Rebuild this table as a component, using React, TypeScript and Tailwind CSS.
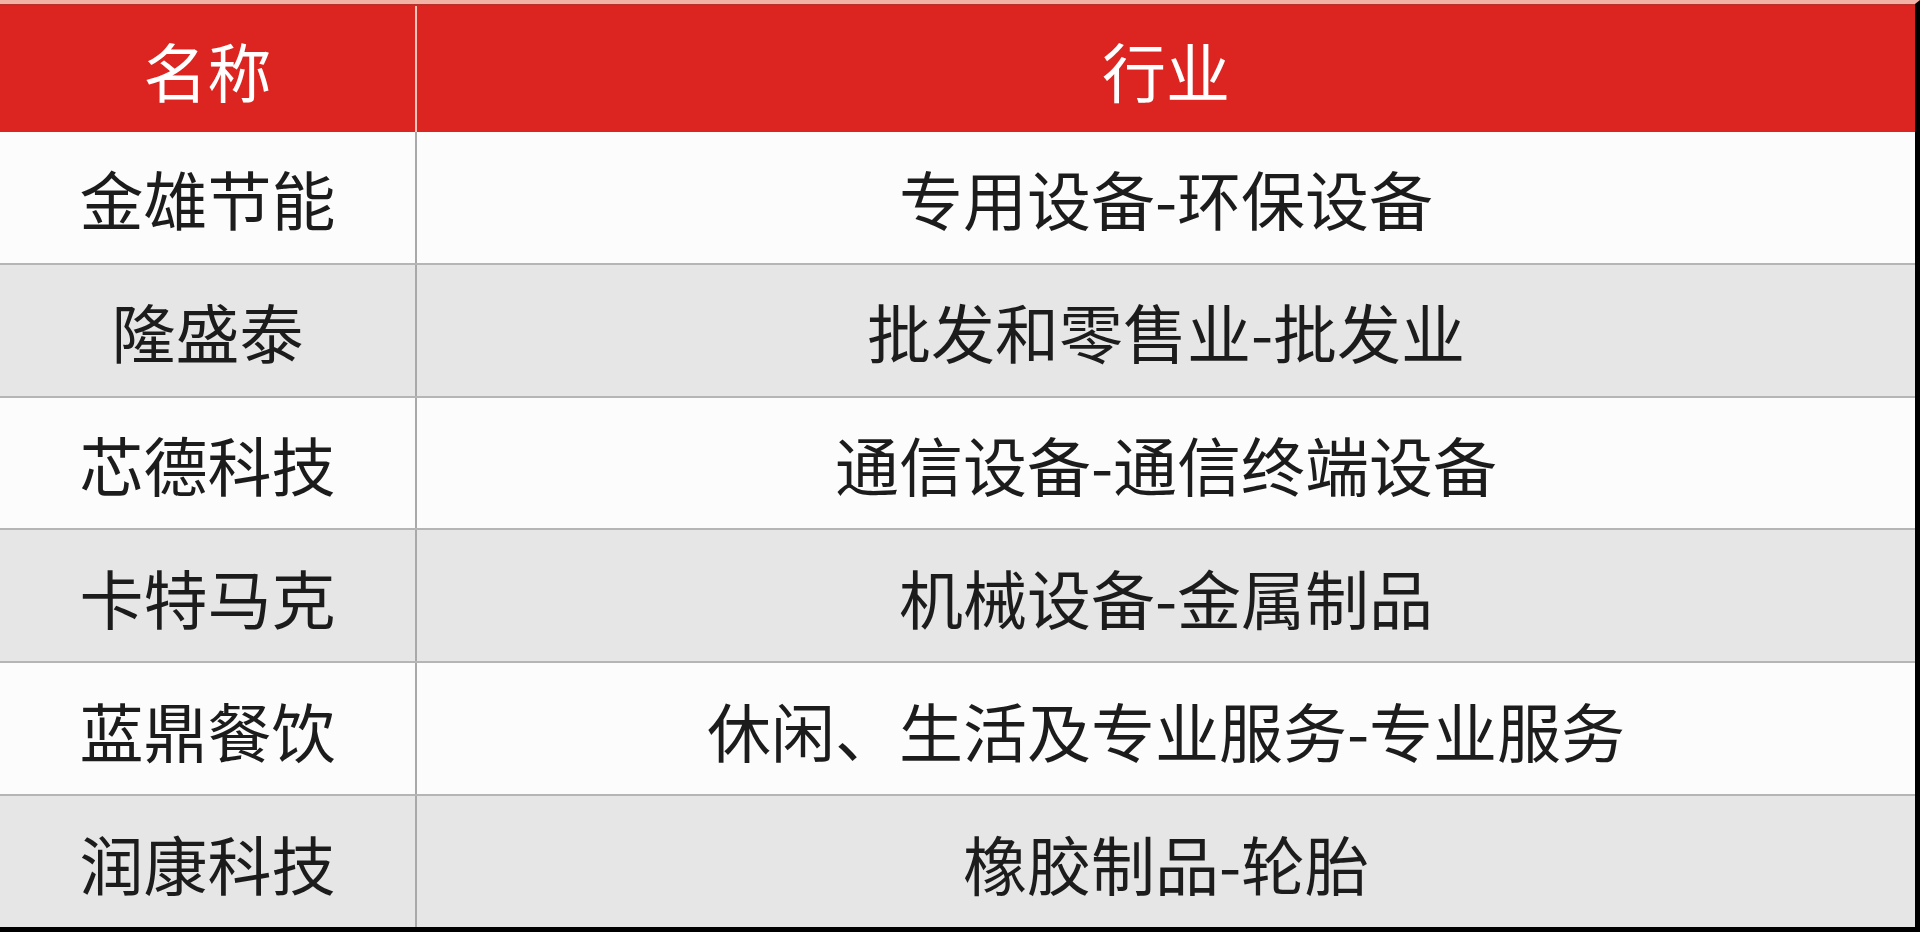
import React from 'react';

const rows: [string, string][] = [
    ['金雄节能', '专用设备-环保设备'],
    ['隆盛泰', '批发和零售业-批发业'],
    ['芯德科技', '通信设备-通信终端设备'],
    ['卡特马克', '机械设备-金属制品'],
    ['蓝鼎餐饮', '休闲、生活及专业服务-专业服务'],
    ['润康科技', '橡胶制品-轮胎'],
];

const font = {fontFamily: '"Noto Sans CJK SC", "Noto Sans", sans-serif'};

const App: React.FC = () => {
    return (
        <div
            className="flex h-[932px] w-full flex-col border-t-4 border-r-[5px] border-b-[5px] border-t-[#f2b3a6] border-r-black border-b-black bg-white"
            style={font}
        >
            <div className="flex h-[128px] shrink-0 border-t-2 border-[#b8322c] bg-[#dc2520] text-[64px] leading-none text-white">
                <div className="flex w-[417px] items-center justify-center border-r-2 border-[#f3c4ba]">名称</div>
                <div className="flex flex-1 items-center justify-center">行业</div>
            </div>
            {rows.map(([name, industry], i) => (
                <div
                    key={name}
                    className={`flex flex-1 text-[64px] leading-none text-[#1c1c1c] ${
                        i % 2 === 0 ? 'bg-[#fcfcfc]' : 'bg-[#e6e6e6]'
                    } ${i > 0 ? 'border-t-2 border-[#b5b5b5]' : ''}`}
                >
                    <div className="flex w-[417px] items-center justify-center border-r-2 border-[#a9a9a9]">{name}</div>
                    <div className="flex flex-1 items-center justify-center">{industry}</div>
                </div>
            ))}
        </div>
    );
};

export default App;
